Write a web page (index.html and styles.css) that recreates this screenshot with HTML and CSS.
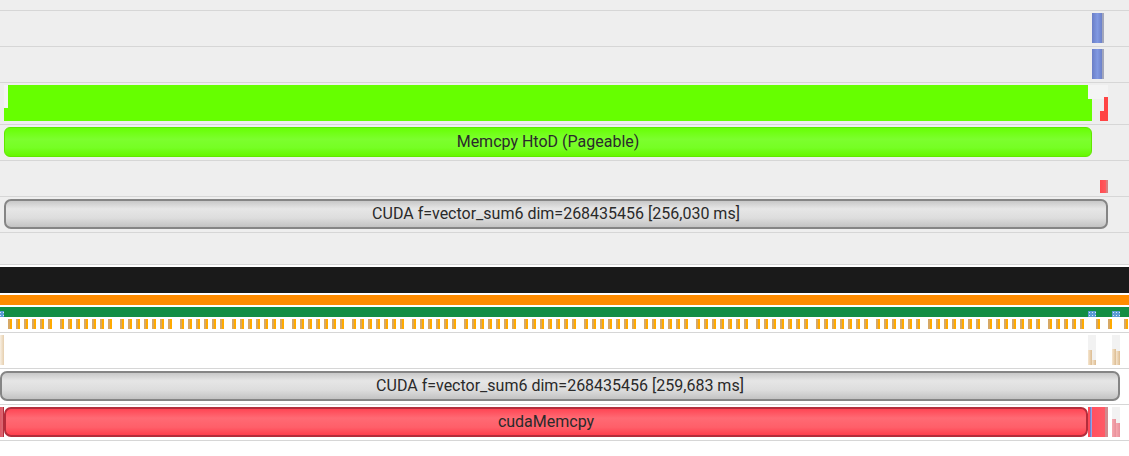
FILE: index.html
```html
<!DOCTYPE html>
<html>
<head>
<meta charset="utf-8">
<link rel="stylesheet" href="styles.css">
</head>
<body>
<div class="timeline">
  <section class="top">
    <div class="row h10"></div>
    <div class="row h35">
      <div class="bar blue" style="left:1092px;width:12px"></div>
    </div>
    <div class="row h35">
      <div class="bar blue" style="left:1092px;width:12px"></div>
    </div>
    <div class="row h41">
      <div class="shade s1" style="left:4px;width:4px"></div>
      <div class="shade s2" style="left:1088px;width:20px"></div>
      <div class="bar lime l1" style="left:8px;width:1080px"></div>
      <div class="bar lime l2" style="left:4px;width:1088px"></div>
      <div class="bar lime l3" style="left:1088px;width:4px"></div>
      <div class="bar red r1" style="left:1100px;width:4px"></div>
      <div class="bar red r2" style="left:1104px;width:4px"></div>
    </div>
    <div class="row h35">
      <div class="bar pill green" style="left:4px;width:1088px">Memcpy HtoD (Pageable)</div>
    </div>
    <div class="row h35">
      <div class="bar red r3" style="left:1100px;width:8px"></div>
    </div>
    <div class="row h35">
      <div class="bar pill gray" style="left:4px;width:1104px">CUDA f=vector_sum6 dim=268435456 [256,030 ms]</div>
    </div>
    <div class="row h31"></div>
  </section>

  <section class="bottom">
    <div class="strip black"></div>
    <div class="strip orange"></div>
    <div class="strip dkgreen">
      <span class="dots" style="left:-4px"></span>
      <span class="dots" style="left:1088px"></span>
      <span class="dots" style="left:1112px"></span>
    </div>
    <div class="ticks">
      <i style="width:44px"></i><i style="width:52px"></i><i style="width:52px"></i><i style="width:44px"></i>
      <i style="width:52px"></i><i style="width:52px"></i><i style="width:52px"></i><i style="width:44px"></i>
      <i style="width:52px"></i><i style="width:52px"></i><i style="width:52px"></i><i style="width:44px"></i>
      <i style="width:52px"></i><i style="width:52px"></i><i style="width:52px"></i><i style="width:44px"></i>
      <i style="width:52px"></i><i style="width:52px"></i><i style="width:36px"></i>
      <i class="wide" style="width:4px"></i><i style="width:4px"></i><i class="wide" style="width:4px"></i>
    </div>
    <div class="row h35 white">
      <div class="bar tan" style="left:0;width:4px"></div>
      <div class="col" style="left:1088px">
        <span class="tb" style="height:15px"></span><span class="tb" style="height:5px"></span>
      </div>
      <div class="col" style="left:1112px">
        <span class="tb" style="height:16px"></span><span class="tb" style="height:14px"></span>
      </div>
    </div>
    <div class="row h35 white">
      <div class="bar pill gray" style="left:0;width:1120px">CUDA f=vector_sum6 dim=268435456 [259,683 ms]</div>
    </div>
    <div class="row h35 white">
      <div class="bar crimson small" style="left:0;width:4px"></div>
      <div class="bar pill crimson" style="left:4px;width:1084px">cudaMemcpy</div>
      <div class="bar seg" style="left:1088px;width:20px"></div>
      <div class="col pinkcol" style="left:1112px">
        <span class="pb" style="height:18px"></span><span class="pb" style="height:14px"></span>
      </div>
    </div>
  </section>
</div>
</body>
</html>
```

FILE: styles.css
```css
* { box-sizing: border-box; }

html, body {
  margin: 0;
  padding: 0;
  background: #ffffff;
  font-family: Roboto, "Liberation Sans", sans-serif;
}

.timeline {
  width: 1129px;
  overflow: hidden;
}

.top {
  background: #eeeeee;
}

.row {
  position: relative;
  border-bottom: 1px solid #d6d6d6;
}

.h10 { height: 11px; }
.h31 { height: 32px; }
.h35 { height: 36px; }
.h41 { height: 42px; }

.row.white { background: #ffffff; }

.bar {
  position: absolute;
  top: 2px;
  height: 30px;
}

.blue {
  background: linear-gradient(to right, #6a7ec6 0, #8199e2 45%, #6c81c9 83%, #a3a7bb 83%, #a3a7bb 100%);
}

.shade {
  position: absolute;
  background: #f4f4f4;
}
.s1 { top: 2px; height: 23px; }
.s2 { top: 2px; height: 14px; }

.lime { background: #66ff00; }
.l1 { top: 2px; height: 36px; }
.l2 { top: 25px; height: 13px; }
.l3 { top: 16px; height: 22px; }

.red { background: #ff4444; }
.r1 { top: 28px; height: 10px; }
.r2 { top: 14px; height: 24px; }
.r3 {
  top: 19px;
  height: 13px;
  background: linear-gradient(to right, #ff4a4f 0, #ff5a5f 70%, #d98080 75%, #d98080 100%);
}

.pill {
  display: flex;
  align-items: center;
  justify-content: center;
  padding-bottom: 2px;
  font-size: 16px;
  color: #2a2a2a;
  white-space: nowrap;
  overflow: hidden;
}

.green {
  border: 1px solid #60e800;
  border-radius: 6px;
  background: linear-gradient(#68ff04 0%, #7cff2e 40%, #76ff24 70%, #66f700 100%);
}

.gray {
  border: 2px solid #858585;
  border-radius: 7px;
  background: linear-gradient(#c8c8c8 0%, #e6e6e6 30%, #dddddd 65%, #c3c3c3 100%);
}

.crimson {
  border: 2px solid #b32d3b;
  border-radius: 7px;
  background: linear-gradient(#ff4654 0%, #ff6a74 35%, #ff5f69 70%, #ff3f4d 100%);
}

.crimson.small {
  border-radius: 0;
  border-width: 0 1px 0 0;
  background: linear-gradient(to right, #e05866, #d86a74);
}

.seg {
  background: linear-gradient(to right,
    #ff4a58 0, #ff4a58 2px,
    #6f80d2 2px, #6f80d2 3px,
    #95a2e0 3px, #95a2e0 4px,
    #ff5060 4px, #ff5a66 17px,
    #d08a8e 17px, #d08a8e 20px);
}

.bottom {
  padding-top: 2px;
  background: #ffffff;
}

.strip {
  position: relative;
}

.black {
  height: 26px;
  background: #1a1a1a;
}

.orange {
  height: 10px;
  margin-top: 2px;
  background: #ff8c00;
}

.dkgreen {
  height: 10px;
  margin-top: 2px;
  background: #138e44;
}

.dots {
  position: absolute;
  top: 4px;
  width: 8px;
  height: 6px;
  background-color: #5b9bd5;
  background-image: radial-gradient(circle, #dbe8f6 0.7px, transparent 1px);
  background-size: 3px 3px;
  background-position: 0 0;
}

.ticks {
  display: flex;
  gap: 8px;
  height: 10px;
  margin-top: 2px;
  margin-bottom: 3px;
  padding-left: 8px;
  box-sizing: content-box;
}

.ticks i {
  display: block;
  height: 10px;
  background: repeating-linear-gradient(to right,
    #d6a866 0, #d6a866 2px,
    #ffaa00 2px, #ffaa00 4px,
    transparent 4px, transparent 8px);
}

.ticks i.wide { margin-left: 4px; }

.ticks + .row { border-top: 1px solid #d6d6d6; height: 37px; }

.tan {
  background: linear-gradient(to right, #f8efe2, #e6cfae);
}

.col {
  position: absolute;
  top: 2px;
  width: 8px;
  height: 30px;
  display: flex;
  align-items: flex-end;
  background: #f2f2f2;
}

.tb {
  width: 4px;
  background: linear-gradient(to right, #f6e6cf, #dcbc92);
}

.pb {
  width: 4px;
  background: linear-gradient(to right, #f7a8b0, #e7909a);
}
```
